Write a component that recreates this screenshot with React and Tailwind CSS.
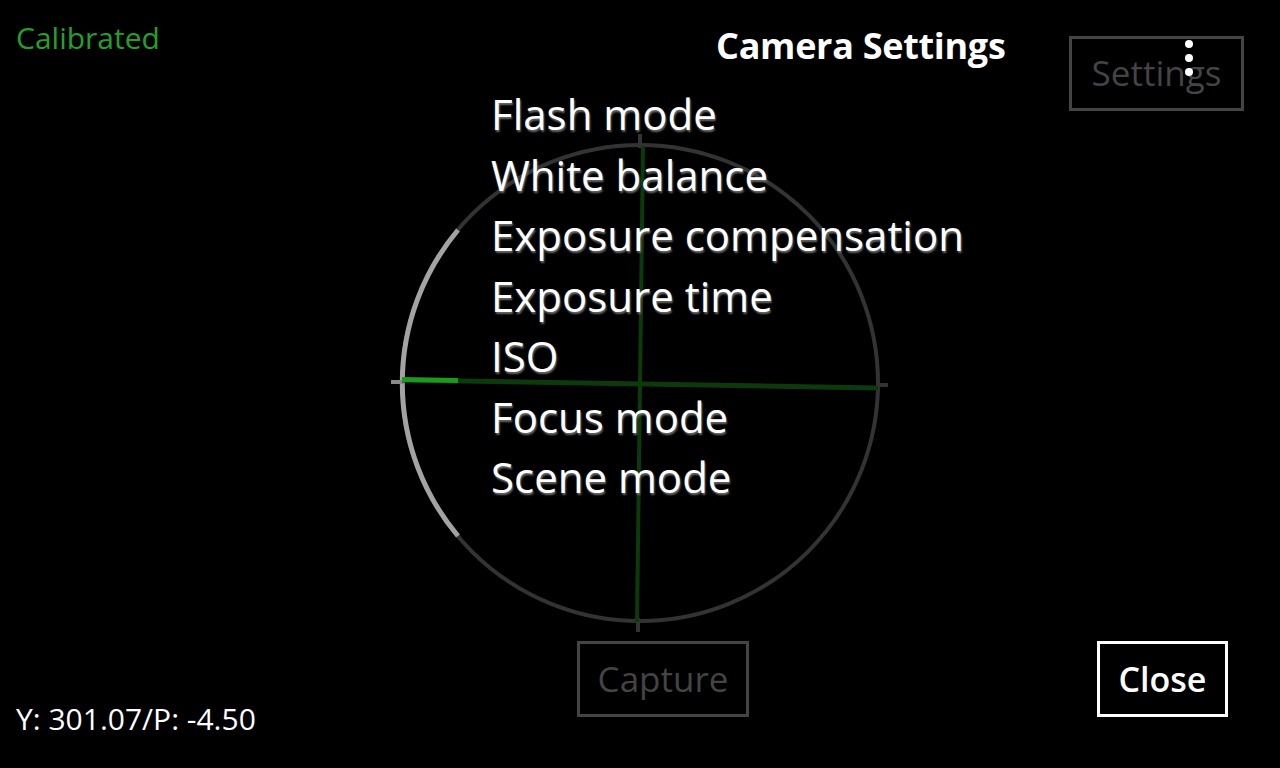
import React from 'react';

const menuItems = [
    'Flash mode',
    'White balance',
    'Exposure compensation',
    'Exposure time',
    'ISO',
    'Focus mode',
    'Scene mode',
];

// reticle drawn behind the HUD
const Reticle = () => (
    <svg className="absolute inset-0" width="1280" height="768" viewBox="0 0 1280 768" fill="none">
        <circle cx="640" cy="383" r="238" stroke="#333333" strokeWidth="4" />
        <path d="M458 230 A238 238 0 0 0 458 536" stroke="#a3a3a3" strokeWidth="5" />
        <line x1="391" y1="382" x2="404" y2="382" stroke="#8a8a8a" strokeWidth="4" />
        <line x1="876" y1="385" x2="888" y2="385" stroke="#333333" strokeWidth="4" />
        <line x1="640" y1="134" x2="640" y2="148" stroke="#333333" strokeWidth="4" />
        <line x1="638" y1="618" x2="638" y2="632" stroke="#333333" strokeWidth="4" />
        <line x1="643" y1="146" x2="637" y2="622" stroke="#0c3a0c" strokeWidth="4" />
        <line x1="402" y1="380" x2="878" y2="388" stroke="#0c3a0c" strokeWidth="5" />
        <line x1="402" y1="379.5" x2="458" y2="380.5" stroke="#1b9a1b" strokeWidth="5" />
    </svg>
);

const App = () => {
    return (
        <div className="relative w-[1280px] h-[768px] bg-black overflow-hidden font-['Open_Sans',sans-serif]">
            <Reticle />
            <div className="relative flex flex-col h-full">
                {/* top bar */}
                <div className="flex items-start">
                    <div className="w-[716px] pl-[16px] pt-[18px]">
                        <span className="text-[30px] leading-[40px] text-[#23a02b]">Calibrated</span>
                    </div>
                    <div className="mt-[22px] text-[36px] leading-[48px] font-bold text-white tracking-[-0.3px]">
                        Camera Settings
                    </div>
                    <div className="relative ml-auto mr-[36px] mt-[36px] w-[175px] h-[75px] border-[3px] border-[#444444] flex items-center justify-center text-[35px] text-[#444444]">
                        Settings
                        <div className="absolute left-[113px] top-[1px] flex flex-col gap-[6px]">
                            <span className="w-[8px] h-[8px] rounded-full bg-white" />
                            <span className="w-[8px] h-[8px] rounded-full bg-white" />
                            <span className="w-[8px] h-[8px] rounded-full bg-white" />
                        </div>
                    </div>
                </div>

                {/* settings list */}
                <ul className="ml-[491px] -mt-[27px] flex flex-col">
                    {menuItems.map((item) => (
                        <li
                            key={item}
                            className="text-[42px] leading-[60.5px] font-medium text-white [text-shadow:1px_2px_2px_#6b6b6b]"
                        >
                            {item}
                        </li>
                    ))}
                </ul>

                {/* bottom bar */}
                <div className="mt-auto mb-[51px] flex items-end">
                    <div className="w-[577px] pl-[16px] mb-[-22px]">
                        <span className="text-[30px] leading-[40px] text-white">Y: 301.07/P: -4.50</span>
                    </div>
                    <div className="w-[172px] h-[76px] border-[3px] border-[#444444] flex items-center justify-center text-[35px] text-[#444444]">
                        Capture
                    </div>
                    <div className="ml-auto mr-[52px] w-[131px] h-[76px] border-[3px] border-white flex items-center justify-center text-[34px] font-semibold text-white">
                        Close
                    </div>
                </div>
            </div>
        </div>
    );
};

export default App;
